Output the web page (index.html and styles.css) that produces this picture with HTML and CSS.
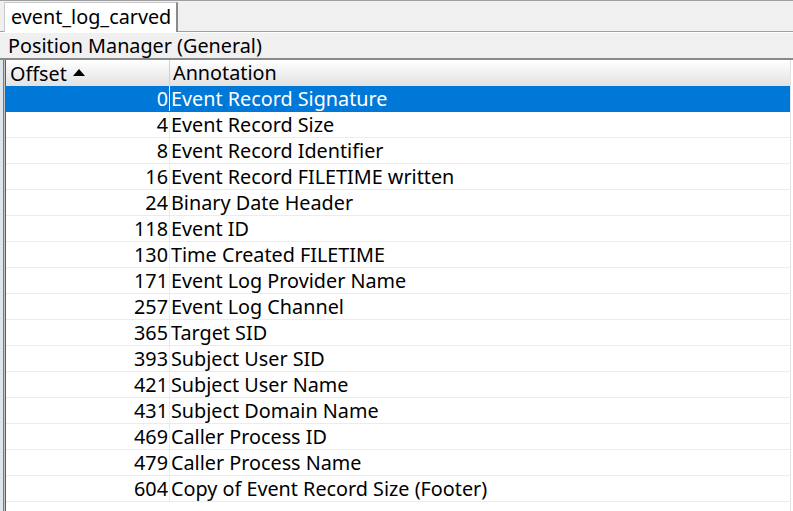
FILE: index.html
```html
<!DOCTYPE html>
<html>
<head>
<meta charset="utf-8">
<link rel="stylesheet" href="styles.css">
</head>
<body>
<div class="tabbar">
  <div class="tab">event_log_carved</div>
</div>
<div class="title">Position Manager (General)</div>
<div class="tablewrap">
  <div class="edge"></div>
  <div class="table">
    <div class="hdr">
      <div class="c1 h1">Offset<svg class="sort" width="12" height="7" viewBox="0 0 12 7"><polygon points="0,7 6,0 12,7" fill="#000"/></svg></div>
      <div class="c2 h2">Annotation</div>
    </div>
    <div class="row sel"><div class="c1">0</div><div class="c2">Event Record Signature</div></div>
    <div class="row"><div class="c1">4</div><div class="c2">Event Record Size</div></div>
    <div class="row"><div class="c1">8</div><div class="c2">Event Record Identifier</div></div>
    <div class="row"><div class="c1">16</div><div class="c2">Event Record FILETIME written</div></div>
    <div class="row"><div class="c1">24</div><div class="c2">Binary Date Header</div></div>
    <div class="row"><div class="c1">118</div><div class="c2">Event ID</div></div>
    <div class="row"><div class="c1">130</div><div class="c2">Time Created FILETIME</div></div>
    <div class="row"><div class="c1">171</div><div class="c2">Event Log Provider Name</div></div>
    <div class="row"><div class="c1">257</div><div class="c2">Event Log Channel</div></div>
    <div class="row"><div class="c1">365</div><div class="c2">Target SID</div></div>
    <div class="row"><div class="c1">393</div><div class="c2">Subject User SID</div></div>
    <div class="row"><div class="c1">421</div><div class="c2">Subject User Name</div></div>
    <div class="row"><div class="c1">431</div><div class="c2">Subject Domain Name</div></div>
    <div class="row"><div class="c1">469</div><div class="c2">Caller Process ID</div></div>
    <div class="row"><div class="c1">479</div><div class="c2">Caller Process Name</div></div>
    <div class="row"><div class="c1">604</div><div class="c2">Copy of Event Record Size (Footer)</div></div>
  </div>
</div>
</body>
</html>
```

FILE: styles.css
```css
html, body {
  margin: 0;
  padding: 0;
  background: #ffffff;
  font-family: "Noto Sans", "Open Sans", sans-serif;
  font-size: 19.8px;
  color: #000;
  width: 793px;
  height: 511px;
  overflow: hidden;
}
.tabbar {
  height: 32px;
  box-sizing: border-box;
  background: #f0f0f0;
  border-top: 1px solid #a0a0a0;
  border-bottom: 1px solid #a0a0a0;
  display: flex;
  align-items: flex-end;
  padding-left: 4px;
}
.tab {
  height: 30px;
  box-sizing: border-box;
  margin-bottom: -1px;
  background: #ffffff;
  border-top: 1px solid #c8c8c8;
  border-left: 1px solid #c8c8c8;
  border-right: 2px solid #8a8a8a;
  padding: 0 8px 0 6px;
  line-height: 27px;
  width: 174px;
  white-space: nowrap;
}
.title {
  height: 27px;
  box-sizing: border-box;
  background: #f0f0f0;
  border-bottom: 2px solid #8a8a8a;
  padding-left: 8px;
  line-height: 25px;
  margin-top: 1px;
  white-space: nowrap;
}
.tablewrap {
  display: flex;
  height: 452px;
}
.edge {
  width: 6px;
  flex: none;
  background: linear-gradient(to right, #dfe5ec 0, #dfe5ec 3px, #7a7a7a 3px, #7a7a7a 4px, #c8c8c8 4px, #c8c8c8 5px, #5a5a5a 5px, #5a5a5a 6px);
}
.table {
  width: 784px;
  flex: none;
  border-right: 1px solid #e3e3e3;
}
.hdr {
  display: flex;
  height: 26px;
  background: linear-gradient(to bottom, #ffffff, #e2e2e2);
  line-height: 25px;
}
.hdr .c1 {
  border-right: 1px solid #d0d0d0;
}
.h1 {
  padding-left: 4px;
  display: flex;
  align-items: center;
}
.sort {
  margin-left: 6px;
  margin-top: -1px;
}
.row {
  display: flex;
  height: 26px;
  box-sizing: border-box;
  border-bottom: 1px solid #ececec;
  line-height: 25px;
}
.c1 {
  width: 164px;
  box-sizing: border-box;
  flex: none;
  border-right: 1px solid #ececec;
}
.row .c1 {
  text-align: right;
  padding-right: 1px;
}
.c2 {
  flex: 1;
  padding-left: 1px;
  white-space: nowrap;
}
.h2.c2 {
  padding-left: 3px;
}
.row.sel {
  background: #0078d7;
  color: #ffffff;
  border-bottom-color: #0078d7;
}
.row.sel .c1 {
  border-right-color: #ffffff;
}
```
